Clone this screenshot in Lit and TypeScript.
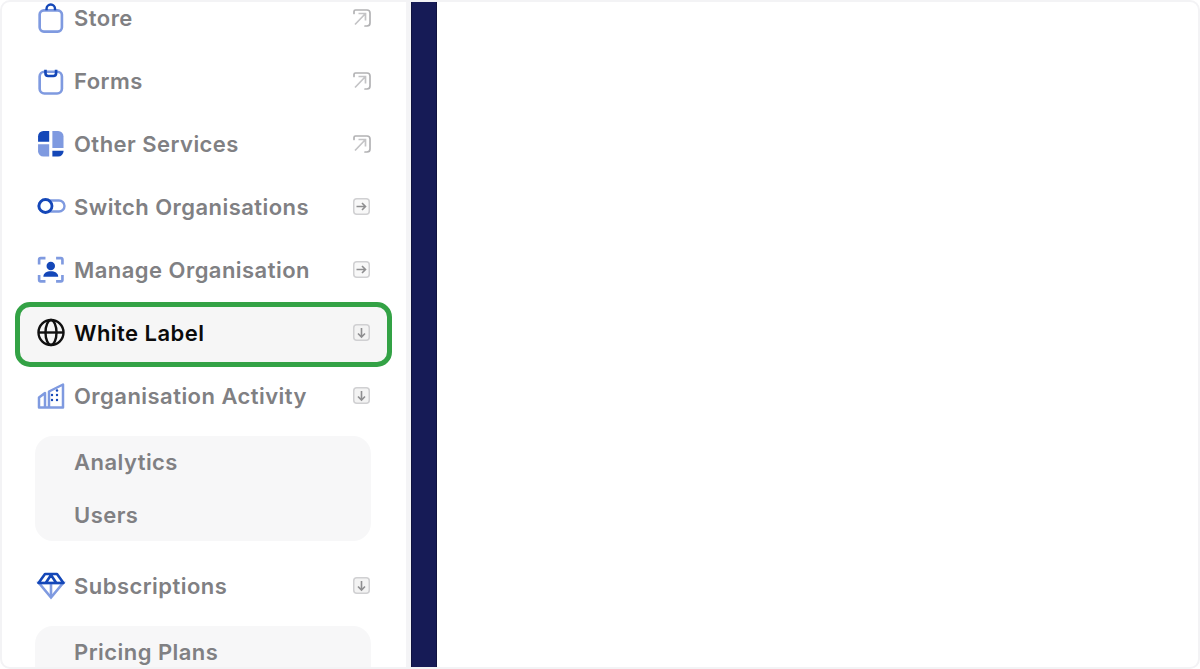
import { LitElement, html, css, svg } from "lit";
import { customElement } from "lit/decorators.js";

const L = "#7f9ae0";
const D = "#1447b8";
const big = "scale(1.06)";

const icons: Record<string, unknown> = {
  store: svg`<g transform="${big}"><rect x="2.500" y="6" width="21" height="20" rx="4" fill="none" stroke="${L}" stroke-width="2.500"/><path d="M9 6V4.500a4 4 0 0 1 8 0V6" fill="none" stroke="${D}" stroke-width="2.300"/></g>`,
  forms: svg`<g transform="${big}"><rect x="2.500" y="4.500" width="21" height="20.500" rx="4.500" fill="none" stroke="${L}" stroke-width="2.500"/><path d="M8 2.500V6a2.500 2.500 0 0 0 2.500 2.500h5A2.500 2.500 0 0 0 18 6V2.500" fill="none" stroke="${D}" stroke-width="2.500"/></g>`,
  other: svg`<g transform="${big}"><path d="M1 11V6a5 5 0 0 1 5-5h5.500v10z" fill="${D}"/><path d="M14.500 1H20a5 5 0 0 1 5 5v11H14.500z" fill="${L}"/><path d="M1 13.500h10.500V25H6a5 5 0 0 1-5-5z" fill="${L}"/><path d="M14.500 19.500H25V20a5 5 0 0 1-5 5h-5.500z" fill="${D}"/></g>`,
  switch: svg`<rect x="1.500" y="7.500" width="26" height="11" rx="5.500" fill="none" stroke="${L}" stroke-width="2.400"/><circle cx="8.500" cy="13" r="6.500" fill="#fff" stroke="${D}" stroke-width="2.800"/>`,
  manage: svg`<g transform="${big}"><path d="M2 8V3.500A1.500 1.500 0 0 1 3.500 2H8M18 2h4.500A1.500 1.500 0 0 1 24 3.500V8M24 18v4.500a1.500 1.500 0 0 1-1.500 1.500H18M8 24H3.500A1.500 1.500 0 0 1 2 22.500V18" fill="none" stroke="${L}" stroke-width="2.500"/><circle cx="13" cy="9.500" r="4" fill="${D}"/><path d="M6 19.500c0-3.500 3.200-5.200 7-5.200s7 1.700 7 5.200z" fill="${D}"/></g>`,
  globe: svg`<g fill="none" stroke="#111" stroke-width="2.400"><circle cx="14" cy="13.500" r="12.500"/><ellipse cx="14" cy="13.500" rx="5.500" ry="12.500"/><path d="M1.500 13.500h25"/></g>`,
  activity: svg`<g fill="none" stroke="${L}" stroke-width="2.500" stroke-linejoin="round"><path d="M12 25.500V9.500L26 2.500V25.500H2V15.500l6-4.500v14.500"/></g><g fill="${D}"><circle cx="15" cy="13" r="1.200"/><circle cx="20" cy="13" r="1.200"/><circle cx="20" cy="8.500" r="1.200"/><circle cx="15" cy="18" r="1.200"/><circle cx="20" cy="18" r="1.200"/></g>`,
  diamond: svg`<path d="M14 25.500 2 11h24z" fill="none" stroke="${L}" stroke-width="2.600"/><path d="M14 11v13.500" stroke="${L}" stroke-width="2.600"/><path d="M8 2h12l6.500 9h-25zM9 10.500 14 3l5 7.500" fill="none" stroke="${D}" stroke-width="2.600" stroke-linejoin="round"/>`,
};

const ext = svg`<path d="M2 5.500V3.500A1.500 1.500 0 0 1 3.500 2H15a3 3 0 0 1 3 3v10a3 3 0 0 1-3 3h-2" fill="none" stroke="#b2b2b4" stroke-width="1.700" stroke-linecap="round"/><path d="M13.500 5.500 3 16.500M6.500 5.500h7V12.500" fill="none" stroke="#c4c4c6" stroke-width="1.700"/>`;
const right = svg`<rect x="1.750" y="1.750" width="15.500" height="15.500" rx="3" fill="#f8f8f8" stroke="#d0d0d2" stroke-width="1.500"/><path d="M4.500 9.500h9M10 6l3.500 3.500L10 13" fill="none" stroke="#8e8e90" stroke-width="1.600"/>`;
const down = svg`<rect x="1.750" y="1.750" width="15.500" height="15.500" rx="3" fill="#f3f3f3" stroke="#d0d0d2" stroke-width="1.500"/><path d="M9.500 5v9M6 10.500 9.500 14l3.500-3.500" fill="none" stroke="#8e8e90" stroke-width="1.600"/>`;

const rows: [string, string, string][] = [
  ["store", "Store", "ext"],
  ["forms", "Forms", "ext"],
  ["other", "Other Services", "ext"],
  ["switch", "Switch Organisations", "right"],
  ["manage", "Manage Organisation", "right"],
  ["globe", "White Label", "down"],
  ["activity", "Organisation Activity", "down"],
];

@customElement("app-root")
export class AppRoot extends LitElement {
  static styles = css`
    :host { display: block; height: 669px; font-family: Inter, "Noto Sans", sans-serif; }
    .frame { height: 669px; box-sizing: border-box; border: 2px solid #f3f3f5; border-radius: 10px; display: flex; overflow: hidden; background: #fff; }
    .side { width: 409px; box-sizing: border-box; padding: 0 35px 0 33px; overflow: hidden; border-right: 5px solid #f4f4f6; flex: none; }
    .list { margin-top: -16px; }
    .row { position: relative; height: 63px; display: flex; align-items: center; font-size: 22px; font-weight: 600; letter-spacing: 0.46px; color: #808083; }
    .row > * { position: relative; }
    .ico { width: 28px; height: 28px; flex: none; margin-left: 1.5px; margin-right: 9.5px; overflow: visible; }
    .label { flex: 1; white-space: nowrap; }
    .arrow { width: 20px; height: 20px; flex: none; margin-top: 1px; margin-right: -1px; }
    .active { color: #0b0b0b; }
    .active::before { content: ""; position: absolute; inset: 1px -21px -3px -20px; box-sizing: border-box; background: #f6f6f6; border: 5px solid #33a245; border-radius: 15px; }
    .panel { background: #f7f7f8; border-radius: 18px; padding: 0 0 0 39px; }
    .panel.one { height: 105px; margin-top: 9px; margin-bottom: 13px; }
    .panel.two { height: 60px; margin-top: 9px; }
    .sub { height: 53px; box-sizing: border-box; padding-bottom: 2px; display: flex; align-items: center; font-size: 22px; font-weight: 600; letter-spacing: 0.46px; color: #808083; }
    .nav { width: 26px; flex: none; box-sizing: border-box; background: #161b56; border-left: 1px solid #10133f; border-right: 1px solid #10133f; }
    .main { flex: 1; }
    svg { display: block; }
  `;

  private arrow(kind: string) {
    const g = kind === "ext" ? ext : kind === "right" ? right : down;
    return html`<svg class="arrow" viewBox="0 0 20 20">${g}</svg>`;
  }

  private row(icon: string, label: string, kind: string, active = false) {
    return html`<div class="row ${active ? "active" : ""}">
      <svg class="ico" viewBox="0 0 28 28">${icons[icon]}</svg>
      <span class="label">${label}</span>
      ${this.arrow(kind)}
    </div>`;
  }

  render() {
    return html`<div class="frame">
      <aside class="side">
        <div class="list">
          ${rows.map(([i, l, k]) => this.row(i, l, k, l === "White Label"))}
          <div class="panel one"><div class="sub">Analytics</div><div class="sub">Users</div></div>
          ${this.row("diamond", "Subscriptions", "down")}
          <div class="panel two"><div class="sub">Pricing Plans</div></div>
        </div>
      </aside>
      <div class="nav"></div>
      <main class="main"></main>
    </div>`;
  }
}
